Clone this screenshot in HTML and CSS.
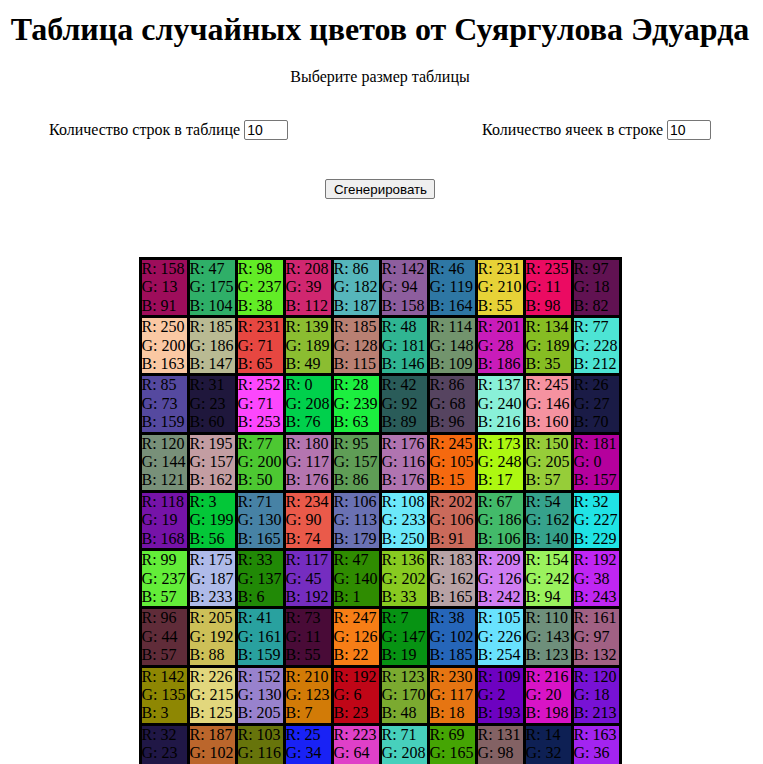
FILE: index.html
```html
<!DOCTYPE html>
<html lang="ru">
<head>
<meta charset="utf-8">
<title>Таблица случайных цветов</title>
<link rel="stylesheet" href="styles.css">
</head>
<body>
<h1 class="title">Таблица случайных цветов от Суяргулова Эдуарда</h1>
<p class="subtitle">Выберите размер таблицы</p>
<div class="controls">
  <label class="field">Количество строк в таблице <input class="num" type="text" value="10"></label>
  <label class="field">Количество ячеек в строке <input class="num" type="text" value="10"></label>
</div>
<div class="actions"><button class="btn" type="button">Сгенерировать</button></div>
<table class="grid" id="grid"></table>
<script src="script.js"></script>
</body>
</html>
```

FILE: styles.css
```css
html, body {
  background: #ffffff;
}
body {
  margin: 8px 11px 8px 8px;
  font-family: "Liberation Serif", "Times New Roman", serif;
  font-size: 16px;
  color: #000;
}
.title {
  margin: 3px 0 0;
  font-size: 32px;
  font-weight: bold;
  text-align: center;
}
.subtitle {
  margin: 20px 0 0;
  text-align: center;
}
.controls {
  display: flex;
  justify-content: space-between;
  align-items: center;
  padding: 0 41px 0 41px;
  margin-top: 34px;
}
.num {
  width: 44px;
  height: 20px;
  box-sizing: border-box;
  padding: 1px 2px;
  border: 1px solid #767676;
  border-radius: 2px;
  font-family: "Liberation Sans", Arial, sans-serif;
  font-size: 14px;
  vertical-align: baseline;
}
.actions {
  margin-top: 39px;
  text-align: center;
}
.btn {
  height: 20px;
  padding: 1px 7px 1px 8px;
  border: 1px solid #767676;
  border-radius: 2px;
  background: #efefef;
  font-family: "Liberation Sans", Arial, sans-serif;
  font-size: 13.33px;
  color: #000;
}
.grid {
  margin: 58px auto 0;
  border-collapse: collapse;
}
.grid td {
  border: 3px solid #000;
  padding: 0 1px 0 0;
  line-height: 18.4px;
  white-space: nowrap;
  vertical-align: top;
}
```

FILE: script.js
```js
var data = [
  [[158,13,91],[47,175,104],[98,237,38],[208,39,112],[86,182,187],[142,94,158],[46,119,164],[231,210,55],[235,11,98],[97,18,82]],
  [[250,200,163],[185,186,147],[231,71,65],[139,189,49],[185,128,115],[48,181,146],[114,148,109],[201,28,186],[134,189,35],[77,228,212]],
  [[85,73,159],[31,23,60],[252,71,253],[0,208,76],[28,239,63],[42,92,89],[86,68,96],[137,240,216],[245,146,160],[26,27,70]],
  [[120,144,121],[195,157,162],[77,200,50],[180,117,176],[95,157,86],[176,116,176],[245,105,15],[173,248,17],[150,205,57],[181,0,157]],
  [[118,19,168],[3,199,56],[71,130,165],[234,90,74],[106,113,179],[108,233,250],[202,106,91],[67,186,106],[54,162,140],[32,227,229]],
  [[99,237,57],[175,187,233],[33,137,6],[117,45,192],[47,140,1],[136,202,33],[183,162,165],[209,126,242],[154,242,94],[192,38,243]],
  [[96,44,57],[205,192,88],[41,161,159],[73,11,55],[247,126,22],[7,147,19],[38,102,185],[105,226,254],[110,143,123],[161,97,132]],
  [[142,135,3],[226,215,125],[152,130,205],[210,123,7],[192,6,23],[123,170,48],[230,117,18],[109,2,193],[216,20,198],[120,18,213]],
  [[32,23,70],[187,102,44],[103,116,11],[25,34,245],[223,64,200],[71,208,188],[69,165,4],[131,98,100],[14,32,84],[163,36,240]],
  [[180,54,120],[64,150,210],[220,190,60],[90,200,140],[150,40,60],[200,120,220],[40,90,30],[250,180,90],[120,60,200],[60,220,180]]
];
var table = document.getElementById('grid');
data.forEach(function (row) {
  var tr = document.createElement('tr');
  row.forEach(function (c) {
    var td = document.createElement('td');
    td.style.backgroundColor = 'rgb(' + c[0] + ',' + c[1] + ',' + c[2] + ')';
    td.innerHTML = 'R: ' + c[0] + '<br>G: ' + c[1] + '<br>B: ' + c[2];
    tr.appendChild(td);
  });
  table.appendChild(tr);
});
```
